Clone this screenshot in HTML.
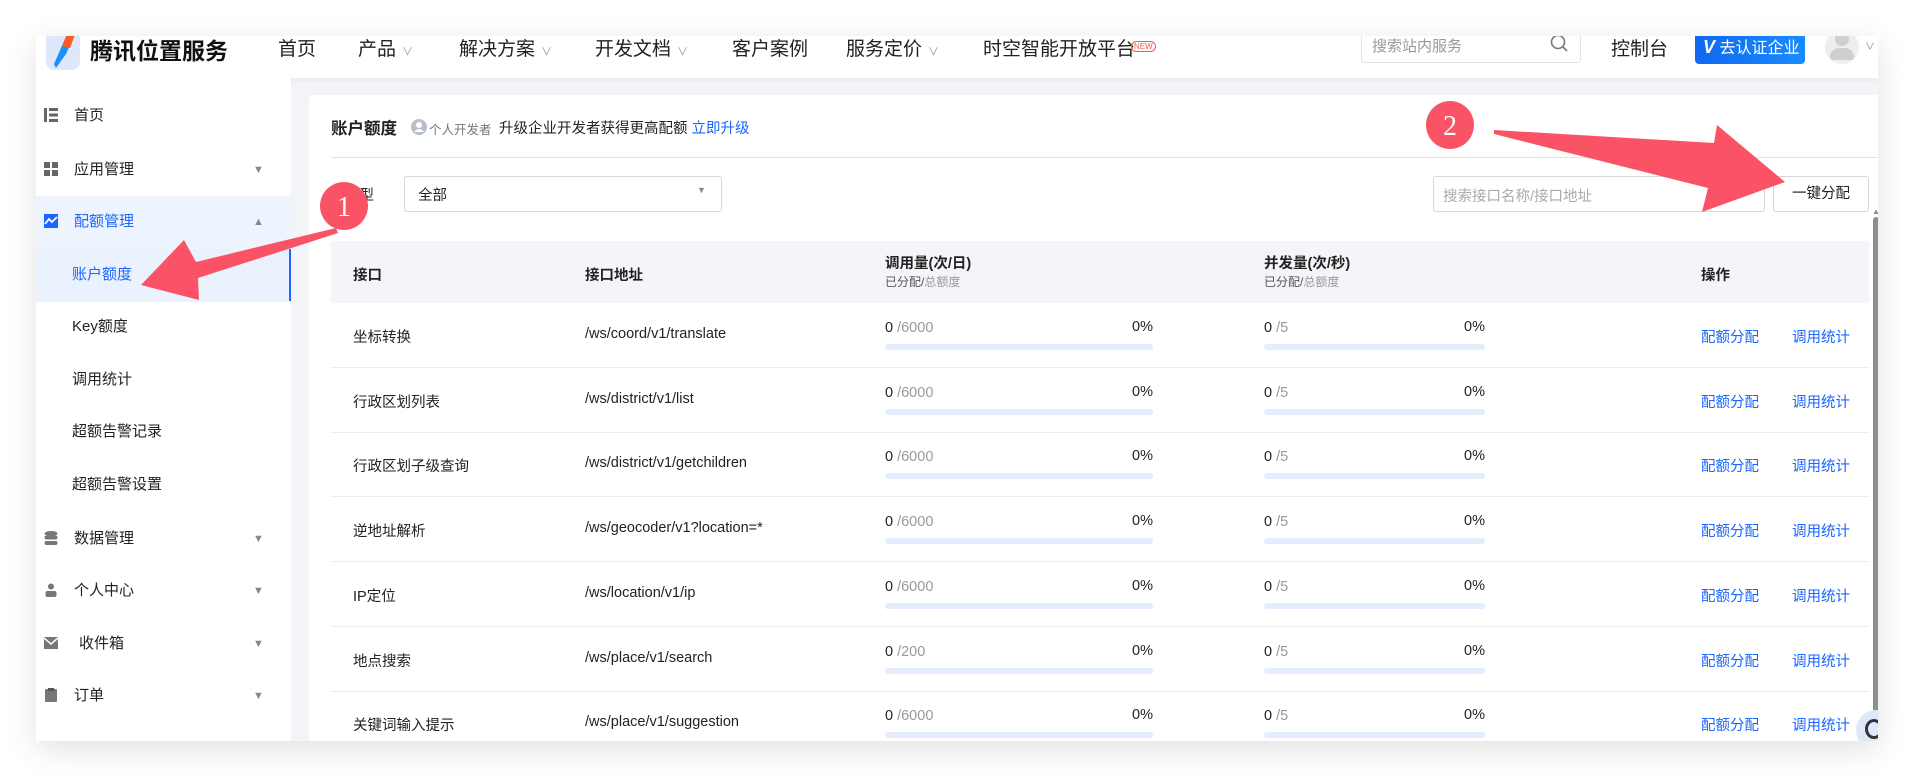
<!DOCTYPE html>
<html><head><meta charset="utf-8">
<style>
*{margin:0;padding:0;box-sizing:border-box}
body{width:1915px;height:777px;background:#fff;position:relative;overflow:hidden;font-family:"Liberation Sans","Noto Sans CJK SC",sans-serif;color:#222}
.a{position:absolute;white-space:nowrap}
#win{position:absolute;left:36px;top:36px;width:1842px;height:705px;background:#f2f4f7;overflow:hidden;box-shadow:0 8px 30px rgba(0,0,0,.12)}
#hdr{position:absolute;left:0;top:0;width:1842px;height:42px;background:#fff;box-shadow:0 2px 6px rgba(0,0,0,.05)}
.nav{font-size:19px;color:#222;top:-2px}
.car{font-size:11px;color:#999;margin-left:6px}
#side{position:absolute;left:0;top:42px;width:255px;height:663px;background:#fff}
.si{position:absolute;left:0;width:255px;height:52px;font-size:15px;color:#222;line-height:52px}
.si .t{position:absolute;left:38px}
.si .s{position:absolute;left:36px}
.si .ar{position:absolute;left:217px;font-size:11px;color:#888}
.ic{position:absolute;left:8px;top:18px;width:14px;height:14px}
#card{position:absolute;left:273px;top:59px;width:1569px;height:646px;background:#fff;border-radius:6px 0 0 0;overflow:hidden}
.th{font-size:14.5px;font-weight:bold;color:#222}
.sub{font-size:12px;color:#555;font-weight:normal}
.cell{font-size:14.5px;color:#222}
.bar{position:absolute;height:6px;background:#e3edfd;border-radius:3px}
.lnk{font-size:14.5px;color:#1a66ff}
.gry{color:#999}
</style></head><body>
<div id="win">
 <div id="hdr">
  <svg class="a" style="left:10px;top:-6px" width="36" height="42" viewBox="0 0 36 42"><rect x="0" y="0" width="34" height="40" rx="8" fill="#dde8fb"/><path d="M22 2 L30 2 L20 24 L10 38 L8 34 Z" fill="#1e8ff5"/><path d="M22 2 L30 2 L24 18 L16 16 Z" fill="#ff5a1f"/></svg>
  <div class="a" style="left:54px;top:-4px;font-size:23px;font-weight:bold;color:#111">腾讯位置服务</div>
  <div class="a nav" style="left:242px">首页</div>
  <div class="a nav" style="left:322px">产品<span class="car">∨</span></div>
  <div class="a nav" style="left:423px">解决方案<span class="car">∨</span></div>
  <div class="a nav" style="left:559px">开发文档<span class="car">∨</span></div>
  <div class="a nav" style="left:696px">客户案例</div>
  <div class="a nav" style="left:810px">服务定价<span class="car">∨</span></div>
  <div class="a nav" style="left:947px">时空智能开放平台</div>
  <div class="a" style="left:1095px;top:5px;font-size:8px;color:#f25a4a;border:1px solid #f25a4a;border-radius:6px;padding:0 2px">NEW</div>
  <div class="a" style="left:1325px;top:-4px;width:220px;height:31px;border:1px solid #e3e3e3;border-top:none;border-radius:0 0 3px 3px"></div>
  <div class="a" style="left:1336px;top:-1px;font-size:15px;color:#999">搜索站内服务</div>
  <svg class="a" style="left:1514px;top:-2px" width="18" height="22"><circle cx="8" cy="8" r="6.5" fill="none" stroke="#777" stroke-width="1.6"/><line x1="12.5" y1="12.5" x2="17" y2="17" stroke="#777" stroke-width="1.6"/></svg>
  <div class="a nav" style="left:1575px">控制台</div>
  <div class="a" style="left:1659px;top:-4px;width:110px;height:32px;background:linear-gradient(90deg,#1068f0,#1a8bff);border-radius:0 0 4px 4px;color:#fff;font-size:16px;line-height:30px;padding-left:8px"><b style="font-style:italic;font-size:18px">V</b> 去认证企业</div>
  <div class="a" style="left:1789px;top:-6px;width:34px;height:34px;border-radius:50%;background:#eee"></div>
  <div class="a" style="left:1799px;top:-4px;width:14px;height:14px;border-radius:50%;background:#cfcfcf"></div>
  <div class="a" style="left:1794px;top:12px;width:24px;height:12px;border-radius:12px 12px 4px 4px;background:#cfcfcf"></div>
  <div class="a" style="left:1829px;top:2px;font-size:10px;color:#888">∨</div>
 </div>
 <div id="side">
  <div class="si" style="top:12px"><svg class="ic" viewBox="0 0 14 14"><rect x="0" y="0" width="3" height="14" fill="#666"/><rect x="5" y="0" width="9" height="3" fill="#666"/><rect x="5" y="5.5" width="9" height="3" fill="#666"/><rect x="5" y="11" width="9" height="3" fill="#666"/></svg><span class="t">首页</span></div>
  <div class="si" style="top:66px"><svg class="ic" viewBox="0 0 14 14"><rect x="0" y="0" width="6" height="6" fill="#666"/><rect x="8" y="0" width="6" height="6" fill="#666"/><rect x="0" y="8" width="6" height="6" fill="#666"/><rect x="8" y="8" width="6" height="6" fill="#666"/></svg><span class="t">应用管理</span><span class="ar">▼</span></div>
  <div class="si" style="top:118px;background:#eef4fe;height:106px;color:#1a66ff"><svg class="ic" viewBox="0 0 14 14"><rect width="14" height="14" fill="#1a66ff"/><path d="M1 10 L5 5 L8 8 L13 3" stroke="#fff" stroke-width="1.8" fill="none"/></svg><span class="t" style="line-height:52px">配额管理</span><span class="ar" style="line-height:52px">▲</span></div>
  <div class="si" style="top:171px;background:#eaf2fe;color:#1a66ff;border-right:2px solid #1a66ff"><span class="s">账户额度</span></div>
  <div class="si" style="top:223px"><span class="s">Key额度</span></div>
  <div class="si" style="top:276px"><span class="s">调用统计</span></div>
  <div class="si" style="top:328px"><span class="s">超额告警记录</span></div>
  <div class="si" style="top:381px"><span class="s">超额告警设置</span></div>
  <div class="si" style="top:435px"><svg class="ic" viewBox="0 0 14 14"><ellipse cx="7" cy="2.5" rx="6.5" ry="2.5" fill="#777"/><rect x="0.5" y="4.5" width="13" height="4" rx="2" fill="#777"/><rect x="0.5" y="10" width="13" height="4" rx="2" fill="#777"/></svg><span class="t">数据管理</span><span class="ar">▼</span></div>
  <div class="si" style="top:487px"><svg class="ic" viewBox="0 0 14 14"><circle cx="7" cy="3.5" r="3" fill="#777"/><rect x="1.5" y="8" width="11" height="6" rx="2" fill="#777"/></svg><span class="t">个人中心</span><span class="ar">▼</span></div>
  <div class="si" style="top:540px"><svg class="ic" viewBox="0 0 14 14"><rect x="0" y="1" width="14" height="12" fill="#777"/><path d="M0 2 L7 8 L14 2" stroke="#fff" stroke-width="1.5" fill="none"/></svg><span class="t" style="left:43px">收件箱</span><span class="ar">▼</span></div>
  <div class="si" style="top:592px"><svg class="ic" viewBox="0 0 14 14"><rect x="1" y="1" width="12" height="13" rx="1" fill="#777"/><rect x="4" y="0" width="6" height="3" fill="#555"/></svg><span class="t">订单</span><span class="ar">▼</span></div>
 </div>
 <div id="card">
  <div class="a" style="left:22px;top:20px;font-size:16.5px;font-weight:bold">账户额度</div>
  <svg class="a" style="left:102px;top:24px" width="16" height="16"><circle cx="8" cy="8" r="8" fill="#b8bfcc"/><circle cx="8" cy="6" r="3" fill="#fff"/><path d="M3 13 Q8 7 13 13" fill="#fff"/></svg>
  <div class="a" style="left:120px;top:24px;font-size:12.5px;color:#777">个人开发者</div>
  <div class="a" style="left:190px;top:22px;font-size:14.5px;color:#222">升级企业开发者获得更高配额 <span style="color:#1a66ff">立即升级</span></div>
  <div class="a" style="left:22px;top:62px;width:1547px;height:1px;background:#e0e3e8"></div>
  <div class="a" style="left:36px;top:89px;font-size:14.5px">类型</div>
  <div class="a" style="left:95px;top:81px;width:318px;height:36px;border:1px solid #d8d8d8;border-radius:3px"></div>
  <div class="a" style="left:109px;top:89px;font-size:14.5px">全部</div>
  <div class="a" style="left:388px;top:90px;font-size:9px;color:#888">▼</div>
  <div class="a" style="left:1124px;top:81px;width:332px;height:36px;border:1px solid #d8d8d8;border-radius:3px"></div>
  <div class="a" style="left:1134px;top:90px;font-size:14.5px;color:#aaa">搜索接口名称/接口地址</div>
  <div class="a" style="left:1464px;top:81px;width:96px;height:36px;border:1px solid #d8d8d8;border-radius:3px;font-size:14.5px;line-height:34px;text-align:center">一键分配</div>
  <div class="a" style="left:22px;top:146px;width:1538px;height:62px;background:#f3f5f9"></div>
  <div class="a th" style="left:44px;top:169px">接口</div>
  <div class="a th" style="left:276px;top:169px">接口地址</div>
  <div class="a th" style="left:576px;top:157px">调用量(次/日)<div class="sub">已分配/<span class="gry">总额度</span></div></div>
  <div class="a th" style="left:955px;top:157px">并发量(次/秒)<div class="sub">已分配/<span class="gry">总额度</span></div></div>
  <div class="a th" style="left:1392px;top:169px">操作</div>
  <div id="rows"></div>
  <div class="a" style="left:1564px;top:122px;width:6px;height:526px;background:#8e8e8e;border-radius:3px"></div>
  <div class="a" style="left:1563px;top:112px;font-size:8px;color:#888">▲</div>
  <div class="a" style="left:1547px;top:615px;width:40px;height:40px;border-radius:50%;background:#dfe8fb"></div>
  <div class="a" style="left:1556px;top:624px;width:18px;height:20px;border-radius:50%;border:3px solid #333"></div>
 </div>
</div>
<svg class="a" style="left:0;top:0" width="1915" height="777">
 <polygon points="336,228 196,262 184,240 141,285 199,300 198,278 338,233" fill="#fa5366"/>
 <ellipse cx="344" cy="206" rx="24" ry="24" fill="#fa5366"/>
 <text x="344" y="216" font-family="Liberation Serif,serif" font-size="28" fill="#fff" text-anchor="middle">1</text>
 <polygon points="1494,130 1714,143 1717,125 1785,182 1702,212 1708,188 1494,134" fill="#fa5366"/>
 <ellipse cx="1450" cy="125" rx="24" ry="24" fill="#fa5366"/>
 <text x="1450" y="135" font-family="Liberation Serif,serif" font-size="28" fill="#fff" text-anchor="middle">2</text>
</svg>
<script>
var d=[["坐标转换","/ws/coord/v1/translate","6000"],["行政区划列表","/ws/district/v1/list","6000"],["行政区划子级查询","/ws/district/v1/getchildren","6000"],["逆地址解析","/ws/geocoder/v1?location=*","6000"],["IP定位","/ws/location/v1/ip","6000"],["地点搜索","/ws/place/v1/search","200"],["关键词输入提示","/ws/place/v1/suggestion","6000"]];
var h="";
d.forEach(function(r,i){var t=208+i*64.7;
h+='<div class="a" style="left:22px;top:'+(t+64)+'px;width:1538px;height:1px;background:#ebedf0"></div>';
h+='<div class="a cell" style="left:44px;top:'+(t+23)+'px">'+r[0]+'</div>';
h+='<div class="a cell" style="left:276px;top:'+(t+23)+'px">'+r[1]+'</div>';
h+='<div class="a cell" style="left:576px;top:'+(t+17)+'px">0 <span class="gry">/'+r[2]+'</span></div>';
h+='<div class="a cell" style="left:804px;top:'+(t+16)+'px;width:40px;text-align:right">0%</div>';
h+='<div class="bar" style="left:576px;top:'+(t+41)+'px;width:268px"></div>';
h+='<div class="a cell" style="left:955px;top:'+(t+17)+'px">0 <span class="gry">/5</span></div>';
h+='<div class="a cell" style="left:1136px;top:'+(t+16)+'px;width:40px;text-align:right">0%</div>';
h+='<div class="bar" style="left:955px;top:'+(t+41)+'px;width:221px"></div>';
h+='<div class="a lnk" style="left:1392px;top:'+(t+23)+'px">配额分配</div>';
h+='<div class="a lnk" style="left:1483px;top:'+(t+23)+'px">调用统计</div>';});
document.getElementById("rows").innerHTML=h;
</script>
</body></html>
